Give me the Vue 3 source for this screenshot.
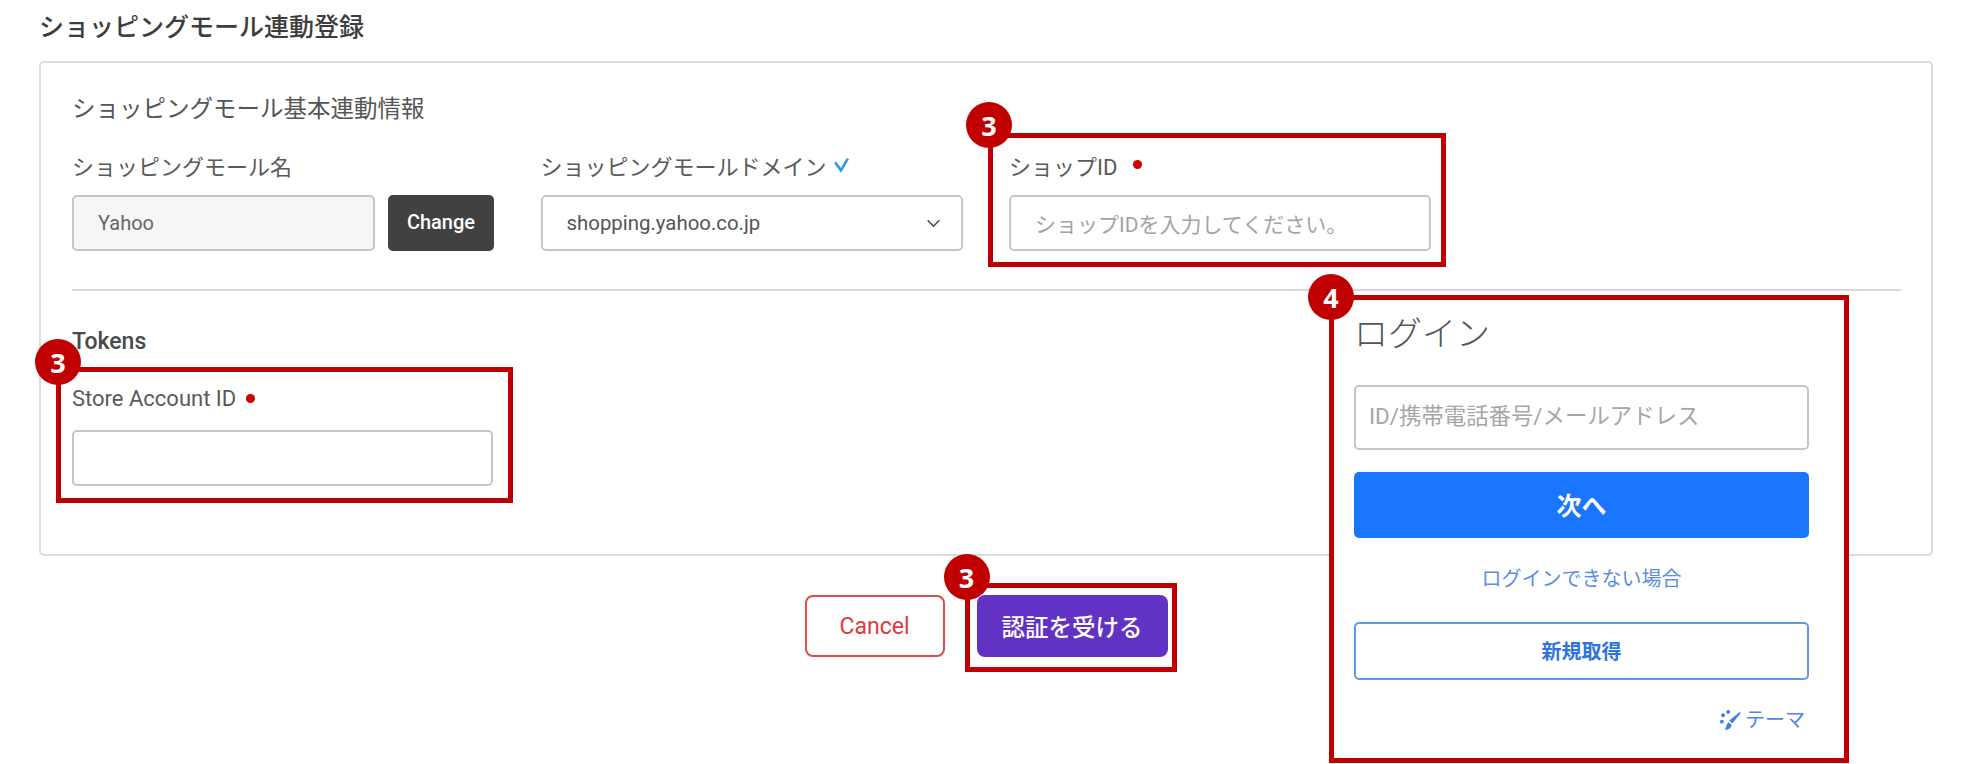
<script setup>
</script>

<template>
  <div class="page">
    <h1 class="title">ショッピングモール連動登録</h1>
    <section class="card">
      <h2 class="heading">ショッピングモール基本連動情報</h2>
      <div class="row">
        <div class="field">
          <div class="label">ショッピングモール名</div>
          <div class="inline">
            <div class="control readonly">Yahoo</div>
            <button class="change">Change</button>
          </div>
        </div>
        <div class="field">
          <div class="label">
            ショッピングモールドメイン
            <svg class="check" viewBox="0 0 16 16" width="17" height="17"><path d="M2 6l5.500 7.500L14 2.500" fill="none" stroke="#2a9be6" stroke-width="2.400"/></svg>
          </div>
          <div class="control select">
            <span>shopping.yahoo.co.jp</span>
            <svg viewBox="0 0 16 10" width="15" height="9"><path d="M1.500 1.500L8 8l6.500-6.500" fill="none" stroke="#444" stroke-width="1.600"/></svg>
          </div>
        </div>
        <div class="field">
          <div class="mark mark-shop"><span class="badge">3</span></div>
          <div class="label">ショップID <i class="dot dot-shop"></i></div>
          <div class="control placeholder">ショップIDを入力してください。</div>
        </div>
      </div>
      <hr class="divider" />
      <h3 class="tokens">Tokens</h3>
      <div class="field store">
        <div class="mark mark-store"><span class="badge">3</span></div>
        <div class="label">Store Account ID <i class="dot"></i></div>
        <div class="control"></div>
      </div>
    </section>
    <div class="actions">
      <button class="cancel">Cancel</button>
      <div class="submit-wrap">
        <div class="mark mark-submit"><span class="badge">3</span></div>
        <button class="submit">認証を受ける</button>
      </div>
    </div>

    <aside class="login">
      <span class="badge badge-login">4</span>
      <div class="login-title">ログイン</div>
      <div class="login-input">ID/携帯電話番号/メールアドレス</div>
      <button class="next">次へ</button>
      <div class="trouble">ログインできない場合</div>
      <button class="signup">新規取得</button>
      <div class="theme">
        <svg viewBox="0 0 20 20" width="23" height="23" fill="#3f7fe8">
          <circle cx="8" cy="2.500" r="1.700"/>
          <circle cx="3.500" cy="5.500" r="1.700"/>
          <circle cx="2.500" cy="11" r="1.700"/>
          <path d="M18 2.500l1 1-7.500 9-2.500-2.500zM8.500 11.500l2.500 2.500c-.5 3-3 4.500-6 4 1.500-1.500 1-5 3.500-6.500z"/>
        </svg>
        <span>テーマ</span>
      </div>
    </aside>
  </div>
</template>

<style scoped>
.page {
  position: relative;
  box-sizing: border-box;
  width: 1971px;
  height: 764px;
  padding: 0 38px 0 39px;
  overflow: hidden;
  background: #fff;
  color: #4a4a4a;
  font-family: Roboto, "Noto Sans CJK JP", sans-serif;
}
.title {
  margin: 0 0 5px;
  font-size: 25px;
  line-height: 56px;
  font-weight: 500;
  color: #3d3d3d;
}
.card {
  box-sizing: border-box;
  height: 495px;
  padding: 31px 30px 0 31px;
  border: 2px solid #dcdcdc;
  border-radius: 5px;
}
.heading {
  margin: 0 0 27px;
  font-size: 23.500px;
  line-height: 30px;
  font-weight: 400;
  color: #555;
}
.row {
  display: grid;
  grid-template-columns: repeat(3, 422px);
  column-gap: 46.500px;
}
.row .label {
  height: 27px;
  margin-bottom: 17px;
}
.field {
  position: relative;
}
.label {
  display: flex;
  align-items: center;
  gap: 6px;
  height: 30px;
  margin-bottom: 14px;
  font-size: 22px;
  color: #5a5a5a;
}
.inline {
  display: flex;
  gap: 13px;
}
.control {
  box-sizing: border-box;
  display: flex;
  align-items: center;
  flex: 1;
  height: 56px;
  padding: 0 24px;
  border: 2px solid #c6c6c6;
  border-radius: 5px;
  background: #fff;
  font-size: 20px;
  color: #666;
}
.readonly {
  background: #f6f6f6;
}
.select {
  justify-content: space-between;
  padding-right: 20px;
  font-size: 20.400px;
  color: #555;
}
.placeholder {
  color: #a3a3a3;
  font-size: 21px;
}
.change {
  width: 106px;
  height: 56px;
  padding: 0 0 2px;
  border: 0;
  border-radius: 5px;
  background: #414141;
  color: #fff;
  font: 500 20px Roboto, sans-serif;
}
.dot {
  width: 9px;
  height: 9px;
  border-radius: 50%;
  background: #d00000;
}
.dot-shop {
  margin-left: 10px;
}
.store .dot {
  margin-left: 4px;
}
.divider {
  height: 2px;
  margin: 38px 0 36px;
  border: 0;
  background: #d8d8d8;
}
.tokens {
  margin: 0 0 26px;
  font-size: 23px;
  line-height: 30px;
  font-weight: 500;
  color: #4a4a4a;
}
.store {
  width: 421px;
}
.store .label {
  margin-bottom: 17px;
}
.actions {
  display: flex;
  justify-content: center;
  gap: 32px;
  margin-top: 39px;
}
.actions button {
  height: 62px;
  border-radius: 8px;
  font-size: 23px;
  font-family: Roboto, "Noto Sans CJK JP", sans-serif;
}
.cancel {
  width: 140px;
  border: 2px solid #dd4d4d;
  background: #fff;
  color: #dd3c3c;
}
.submit-wrap {
  position: relative;
}
.submit {
  display: block;
  width: 191px;
  border: 0;
  background: #6232c4;
  color: #fff;
  font-weight: 500;
}
.actions .submit {
  font-size: 23.500px;
}
.mark {
  position: absolute;
  box-sizing: border-box;
  border: 5px solid #c00000;
  pointer-events: none;
}
.mark-shop {
  inset: -18px -15px -16px -21px;
}
.mark-store {
  inset: -16px -20px -17px -16px;
}
.mark-submit {
  inset: -12px -9px -15px -12px;
}
.badge {
  position: absolute;
  display: flex;
  align-items: center;
  justify-content: center;
  width: 46px;
  height: 46px;
  border-radius: 50%;
  background: #c00000;
  color: #fff;
  font: 700 27px "Noto Sans", sans-serif;
  z-index: 2;
}
.mark-shop .badge {
  left: -27px;
  top: -36px;
}
.mark-store .badge {
  left: -26px;
  top: -33px;
}
.mark-submit .badge {
  left: -26px;
  top: -34px;
}
.login {
  position: absolute;
  left: 1329px;
  top: 295px;
  box-sizing: border-box;
  width: 520px;
  height: 468px;
  padding: 0 35px 0 20px;
  border: 5px solid #c00000;
  background: #fff;
}
.badge-login {
  left: -26px;
  top: -26px;
}
.login-title {
  height: 60px;
  margin-top: 4px;
  font-size: 34px;
  line-height: 60px;
  font-weight: 300;
  color: #555;
}
.login-input {
  box-sizing: border-box;
  height: 65px;
  margin-top: 21px;
  padding: 0 0 0 13px;
  border: 2px solid #c6c6c6;
  border-radius: 5px;
  font-size: 22.400px;
  line-height: 59px;
  color: #a6a6a6;
}
.next {
  display: block;
  width: 100%;
  height: 66px;
  margin-top: 22px;
  padding: 0 0 3px;
  border: 0;
  border-radius: 5px;
  background: #1b76ff;
  color: #fff;
  font: 700 25px Roboto, "Noto Sans CJK JP", sans-serif;
}
.trouble {
  margin-top: 25px;
  font-size: 20px;
  line-height: 32px;
  text-align: center;
  color: #5b8de6;
}
.signup {
  display: block;
  width: 100%;
  height: 58px;
  margin-top: 27px;
  padding: 0 0 2px;
  border: 2px solid #5d9aeb;
  border-radius: 5px;
  background: #fff;
  color: #2d74e0;
  font: 700 20px Roboto, "Noto Sans CJK JP", sans-serif;
}
.theme {
  display: flex;
  justify-content: flex-end;
  align-items: center;
  gap: 3px;
  margin-top: 26px;
  padding-right: 4px;
  font-size: 20px;
  line-height: 28px;
  color: #4f86e6;
}
</style>

<style>
html, body {
  margin: 0;
  background: #fff;
}
</style>
